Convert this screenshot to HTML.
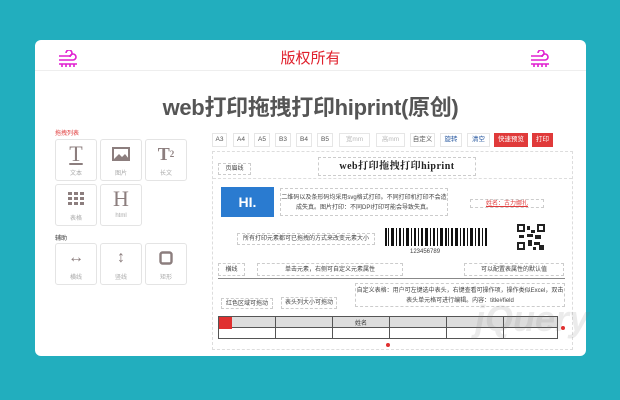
<!DOCTYPE html>
<html><head><meta charset="utf-8"><style>
*{margin:0;padding:0;box-sizing:border-box}
body{width:620px;height:400px;background:#22aebe;font-family:"Liberation Sans","Noto Sans CJK SC",sans-serif;position:relative;overflow:hidden}
.card{position:absolute;left:35px;top:40px;width:551px;height:316px;background:#fff;border-radius:6px}
.a{position:absolute}
.hdr{left:0;top:0;width:551px;height:31px;border-bottom:1px solid #eee}
.cp{left:0;width:551px;top:7px;text-align:center;color:#e0202c;font-size:15px}
.title{left:0;width:551px;top:50px;text-align:center;font-weight:bold;font-size:22px;color:#555;letter-spacing:-0.3px}
.tile{width:42px;height:42px;border:1px solid #e4e4e4;border-radius:3px;text-align:center;color:#aaa;font-size:6px}
.tile .ic{height:28px;display:flex;align-items:center;justify-content:center;color:#8c7e7e}
.btn{top:93px;height:14px;border:1px solid #e6e6e6;font-size:6.5px;line-height:12px;text-align:center;color:#555}
.red{background:#e03a3a;color:#fff;border-color:#e03a3a}
.box{border:1px dashed #ccc;font-size:6px;color:#444;text-align:center}
.paper{left:177px;top:111px;width:361px;height:199px;border:1px dashed #ddd}
</style></head><body>
<div class="card">
 <div class="a hdr"></div>
 <svg class="a" style="left:23px;top:10px" width="20" height="17" viewBox="0 0 20 17" fill="none" stroke="#e020d0" stroke-width="1.6"><path d="M1 6h10a3 3 0 1 0-3-3"/><path d="M1 10h14a3 3 0 1 0-3-3"/><path d="M1 14h18M4 14v3M8 14v3M12 14v3M16 14v3"/></svg>
 <svg class="a" style="left:495px;top:10px" width="20" height="17" viewBox="0 0 20 17" fill="none" stroke="#e020d0" stroke-width="1.6"><path d="M1 6h10a3 3 0 1 0-3-3"/><path d="M1 10h14a3 3 0 1 0-3-3"/><path d="M1 14h18M4 14v3M8 14v3M12 14v3M16 14v3"/></svg>
 <div class="a cp">版权所有</div>
 <div class="a title">web打印拖拽打印hiprint(原创)</div>

 <div class="a" style="left:20px;top:88px;font-size:6px;color:#e03a3a">拖拽列表</div>
 <div class="a tile" style="left:20px;top:99px"><div class="ic" style="font-family:'Liberation Serif';font-size:22px;text-decoration:underline">T</div>文本</div>
 <div class="a tile" style="left:65px;top:99px"><div class="ic"><svg width="18" height="14"><rect x="1" y="1" width="16" height="12" fill="none" stroke="#8c7e7e" stroke-width="2"/><path d="M2 12l5-5 3 3 3-3 4 5z" fill="#8c7e7e"/></svg></div>图片</div>
 <div class="a tile" style="left:110px;top:99px"><div class="ic" style="font-family:'Liberation Serif';font-size:18px;font-weight:bold">T<span style="font-size:9px">2</span></div>长文</div>
 <div class="a tile" style="left:20px;top:144px"><div class="ic"><svg width="16" height="14"><g fill="#8c7e7e"><rect x="0" y="0" width="4" height="3"/><rect x="6" y="0" width="4" height="3"/><rect x="12" y="0" width="4" height="3"/><rect x="0" y="5" width="4" height="3"/><rect x="6" y="5" width="4" height="3"/><rect x="12" y="5" width="4" height="3"/><rect x="0" y="10" width="4" height="3"/><rect x="6" y="10" width="4" height="3"/><rect x="12" y="10" width="4" height="3"/></g></svg></div>表格</div>
 <div class="a tile" style="left:65px;top:144px"><div class="ic" style="font-family:'Liberation Serif';font-size:22px">H</div>html</div>
 <div class="a" style="left:20px;top:193px;font-size:6px;color:#333">辅助</div>
 <div class="a tile" style="left:20px;top:203px"><div class="ic" style="font-size:16px">↔</div>横线</div>
 <div class="a tile" style="left:65px;top:203px"><div class="ic" style="font-size:16px">↕</div>竖线</div>
 <div class="a tile" style="left:110px;top:203px"><div class="ic"><svg width="14" height="14"><rect x="1.5" y="1.5" width="11" height="11" rx="2" fill="none" stroke="#8c7e7e" stroke-width="2.4"/></svg></div>矩形</div>

 <div class="a btn" style="left:177px;width:15px">A3</div>
 <div class="a btn" style="left:198px;width:16px">A4</div>
 <div class="a btn" style="left:219px;width:16px">A5</div>
 <div class="a btn" style="left:240px;width:16px">B3</div>
 <div class="a btn" style="left:261px;width:16px">B4</div>
 <div class="a btn" style="left:282px;width:16px">B5</div>
 <div class="a btn" style="left:304px;width:31px;color:#bbb">宽mm</div>
 <div class="a btn" style="left:341px;width:29px;color:#bbb">高mm</div>
 <div class="a btn" style="left:375px;width:25px">自定义</div>
 <div class="a btn" style="left:405px;width:22px;color:#2a5aa0">旋转</div>
 <div class="a btn" style="left:432px;width:23px;color:#2a5aa0">清空</div>
 <div class="a btn red" style="left:459px;width:34px">快速预览</div>
 <div class="a btn red" style="left:497px;width:21px">打印</div>

 <div class="a paper"></div>
 <div class="a" style="left:178px;top:138px;width:359px;border-top:1px dashed #ddd"></div>
 <div class="a box" style="left:183px;top:123px;width:33px;height:12px;line-height:11px">页眉线</div>
 <div class="a box" style="left:283px;top:117px;width:158px;height:19px;line-height:18px;font-family:'Liberation Serif','Noto Serif CJK SC',serif;font-weight:bold;font-size:10px;color:#222;letter-spacing:0.5px">web打印拖拽打印hiprint</div>
 <div class="a" style="left:186px;top:147px;width:53px;height:30px;background:#2a7bd0;color:#fff;font-weight:bold;font-size:14px;line-height:30px;text-align:center">HI.</div>
 <div class="a box" style="left:245px;top:148px;width:168px;height:28px;line-height:10px;padding-top:4px">二维码以及条形码均采用svg格式打印。不同打印机打印不会造成失真。图片打印：不同DPI打印可能会导致失真。</div>
 <div class="a box" style="left:435px;top:159px;width:74px;height:9px;line-height:8px;color:#e03a3a;text-decoration:underline">姓名：古力娜扎</div>
 <div class="a box" style="left:202px;top:193px;width:138px;height:12px;line-height:11px">所有打印元素都可已拖拽的方式来改变元素大小</div>
 <svg class="a" style="left:350px;top:188px" width="108" height="22"><g fill="#111">
 <rect x="0" y="0" width="2" height="18"/><rect x="3" y="0" width="1" height="18"/><rect x="6" y="0" width="3" height="18"/><rect x="11" y="0" width="1" height="18"/><rect x="14" y="0" width="2" height="18"/><rect x="18" y="0" width="1" height="18"/><rect x="21" y="0" width="3" height="18"/><rect x="26" y="0" width="1" height="18"/><rect x="29" y="0" width="2" height="18"/><rect x="33" y="0" width="1" height="18"/><rect x="36" y="0" width="2" height="18"/><rect x="40" y="0" width="3" height="18"/><rect x="45" y="0" width="1" height="18"/><rect x="48" y="0" width="2" height="18"/><rect x="52" y="0" width="1" height="18"/><rect x="55" y="0" width="3" height="18"/><rect x="60" y="0" width="2" height="18"/><rect x="63" y="0" width="1" height="18"/><rect x="66" y="0" width="2" height="18"/><rect x="70" y="0" width="3" height="18"/><rect x="75" y="0" width="1" height="18"/><rect x="78" y="0" width="2" height="18"/><rect x="82" y="0" width="1" height="18"/><rect x="85" y="0" width="3" height="18"/><rect x="90" y="0" width="1" height="18"/><rect x="93" y="0" width="2" height="18"/><rect x="97" y="0" width="1" height="18"/><rect x="100" y="0" width="2" height="18"/></g></svg>
 <div class="a" style="left:375px;top:209px;font-size:6px;color:#444">123456789</div>
 <svg class="a" style="left:482px;top:184px" width="28" height="26"><rect width="28" height="26" fill="#fff"/><g fill="#222"><rect x="0" y="0" width="8" height="8"/><rect x="20" y="0" width="8" height="8"/><rect x="0" y="18" width="8" height="8"/><rect x="10" y="2" width="3" height="4"/><rect x="14" y="6" width="4" height="3"/><rect x="10" y="10" width="6" height="3"/><rect x="18" y="11" width="6" height="4"/><rect x="2" y="11" width="5" height="3"/><rect x="11" y="16" width="4" height="6"/><rect x="17" y="18" width="6" height="3"/><rect x="22" y="21" width="5" height="5"/><rect x="16" y="23" width="3" height="3"/></g><g fill="#fff"><rect x="2" y="2" width="4" height="4"/><rect x="22" y="2" width="4" height="4"/><rect x="2" y="20" width="4" height="4"/></g></svg>
 <div class="a box" style="left:183px;top:223px;width:27px;height:13px;line-height:12px">横线</div>
 <div class="a box" style="left:222px;top:223px;width:146px;height:13px;line-height:12px">单击元素，右侧可自定义元素属性</div>
 <div class="a box" style="left:429px;top:223px;width:100px;height:13px;line-height:12px">可以配置表属性的默认值</div>
 <div class="a" style="left:183px;top:238px;width:347px;border-top:1px solid #888"></div>
 <div class="a box" style="left:320px;top:243px;width:210px;height:24px;line-height:10px;padding-top:2px">自定义表格：用户可左键选中表头，右键查看可操作项，操作类似Excel，双击表头单元格可进行编辑。内容：title#field</div>
 <div class="a box" style="left:186px;top:258px;width:52px;height:11px;line-height:10px">红色区域可拖动</div>
 <div class="a box" style="left:246px;top:257px;width:56px;height:12px;line-height:11px">表头列大小可拖动</div>
 <table class="a" style="left:183px;top:276px;width:340px;border-collapse:collapse;font-size:6px;color:#333">
  <tr style="background:#ddd;height:11px"><td style="border:1px solid #555;width:57px;position:relative"><div style="position:absolute;left:0;top:0;width:13px;height:12px;background:#e03030"></div></td><td style="border:1px solid #555;width:57px"></td><td style="border:1px solid #555;width:57px;text-align:center">姓名</td><td style="border:1px solid #555;width:57px"></td><td style="border:1px solid #555;width:57px"></td><td style="border:1px solid #555"></td></tr>
  <tr style="height:11px"><td style="border:1px solid #555"></td><td style="border:1px solid #555"></td><td style="border:1px solid #555"></td><td style="border:1px solid #555"></td><td style="border:1px solid #555"></td><td style="border:1px solid #555"></td></tr>
 </table>
 <div class="a" style="left:351px;top:303px;width:4px;height:4px;border-radius:2px;background:#e03030"></div>
 <div class="a" style="left:526px;top:286px;width:4px;height:4px;border-radius:2px;background:#e03030"></div>
 <div class="a" style="left:440px;top:258px;font-size:36px;font-style:italic;font-weight:bold;color:rgba(120,120,120,0.15)">jQuery</div>
</div>
</body></html>
